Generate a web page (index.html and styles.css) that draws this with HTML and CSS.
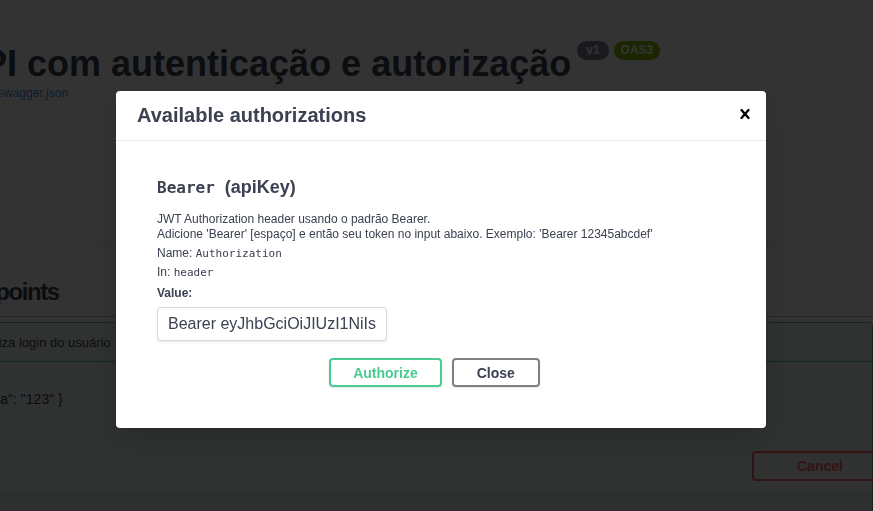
FILE: index.html
```html
<!DOCTYPE html>
<html lang="pt-BR">
<head>
<meta charset="utf-8">
<title>Swagger UI</title>
<link rel="stylesheet" href="styles.css">
</head>
<body>
<div class="page">
  <header class="info">
    <h2 class="title">API com autenticação e autorização<span class="badge badge-version">v1</span><span class="badge badge-oas">OAS3</span></h2>
    <a class="url">/swagger/v1/swagger.json</a>
  </header>
  <div class="scheme"></div>
  <section class="tag">
    <h3 class="tag-title">Endpoints</h3>
    <div class="opblock">
      <div class="opblock-summary"><span class="opblock-desc">Realiza login do usuário</span></div>
      <div class="opblock-body">
        <div class="example">"senha": "123" }</div>
        <div class="section-header"><button class="btn-cancel">Cancel</button></div>
        <div class="section-footer"></div>
      </div>
    </div>
  </section>
</div>

<div class="overlay">
  <div class="modal">
    <div class="modal-header">
      <h3 class="modal-title">Available authorizations</h3>
      <button class="close-modal" aria-label="Close">
        <svg width="20" height="20" viewBox="0 0 20 20"><path d="M14.348 14.849a1.2 1.2 0 0 1-1.697 0L10 11.819l-2.651 3.029a1.2 1.2 0 1 1-1.697-1.697l2.758-3.15-2.759-3.152a1.2 1.2 0 1 1 1.697-1.697L10 8.183l2.651-3.031a1.2 1.2 0 1 1 1.697 1.697l-2.758 3.152 2.758 3.15a1.2 1.2 0 0 1 0 1.698z"/></svg>
      </button>
    </div>
    <div class="modal-content">
      <div class="auth-container">
        <h4 class="auth-title"><code class="auth-name">Bearer</code>&nbsp; (apiKey)</h4>
        <p class="markdown">JWT Authorization header usando o padrão Bearer.<br>Adicione 'Bearer' [espaço] e então seu token no input abaixo. Exemplo: 'Bearer 12345abcdef'</p>
        <div class="row">Name: <code class="mono">Authorization</code></div>
        <div class="row">In: <code class="mono">header</code></div>
        <div class="row row-label">Value:</div>
        <input class="auth-input" type="text" value="Bearer eyJhbGciOiJIUzI1NiIsInR5cCI6IkpXVCJ9.eyJzdWIiOiIxMjMifQ">
        <div class="auth-btns">
          <button class="btn btn-authorize">Authorize</button>
          <button class="btn btn-close">Close</button>
        </div>
      </div>
    </div>
  </div>
</div>
</body>
</html>
```

FILE: styles.css
```css
html, body {
  margin: 0;
  padding: 0;
}
body {
  background: #fff;
  font-family: "Liberation Sans", Arial, sans-serif;
  color: #3b4151;
  overflow: hidden;
  height: 511px;
}

/* underlying page */
.page {
  display: flex;
  flex-direction: column;
}
.info {
  display: flex;
  flex-direction: column;
  align-items: flex-start;
}
.title {
  margin: 42px 0 0 -43px;
  font-size: 36px;
  line-height: 43px;
  font-weight: bold;
  white-space: nowrap;
  color: #3b4151;
}
.badge {
  display: inline-block;
  vertical-align: top;
  margin-top: -1px;
  height: 19px;
  line-height: 19px;
  font-size: 12px;
  font-weight: bold;
  color: #fff;
  border-radius: 57px;
}
.badge-version {
  margin-left: 6px;
  padding: 0 9px;
  background: #7d8492;
}
.badge-oas {
  margin-left: 5px;
  padding: 0 7px;
  background: #89bf04;
}
.url {
  margin-left: -70px;
  font-size: 12px;
  line-height: 16px;
  color: #4990e2;
  white-space: nowrap;
}
.scheme {
  height: 145px;
  border-bottom: 1px solid #e6e6e6;
}
.tag-title {
  margin: 31px 0 0 -46px;
  padding-bottom: 10px;
  font-size: 24px;
  line-height: 28px;
  font-weight: bold;
  letter-spacing: -1.4px;
  border-bottom: 1px solid rgba(59, 65, 81, 0.3);
  white-space: nowrap;
}
.opblock {
  margin: 5px 0 0 -20px;
  border: 1px solid #49cc90;
  border-radius: 4px;
  background: rgba(73, 204, 144, 0.1);
}
.opblock-summary {
  height: 38px;
  display: flex;
  align-items: center;
  border-bottom: 1px solid #49cc90;
}
.opblock-desc {
  margin-left: -9px;
  font-size: 13px;
  white-space: nowrap;
}
.example {
  margin: 29px 0 0 -16px;
  height: 18px;
  font-size: 14px;
  white-space: nowrap;
}
.section-header {
  height: 82px;
  display: flex;
  justify-content: flex-end;
  align-items: flex-start;
}
.btn-cancel {
  margin-top: 42px;
  margin-right: -30px;
  width: 150px;
  height: 30px;
  border: 2px solid #ff6060;
  border-radius: 4px;
  background: transparent;
  color: #ff6060;
  font-family: "Liberation Sans", Arial, sans-serif;
  font-size: 14px;
  font-weight: bold;
  text-align: left;
  padding: 0 0 0 43px;
}
.section-footer {
  height: 40px;
  background: rgba(0, 0, 0, 0.05);
}

/* overlay & modal */
.overlay {
  position: fixed;
  inset: 0;
  background: rgba(0, 0, 0, 0.8);
  display: flex;
  align-items: flex-start;
  padding: 91px 0 0 116px;
}
.modal {
  width: 650px;
  background: #fff;
  border-radius: 4px;
  box-shadow: 0 10px 30px -2px rgba(0, 0, 0, 0.2);
}
.modal-header {
  display: flex;
  align-items: center;
  justify-content: space-between;
  padding: 12px 11px 12px 21px;
  border-bottom: 1px solid #ebebeb;
}
.modal-title {
  margin: 0;
  font-size: 20px;
  line-height: 25px;
  font-weight: bold;
  color: #3b4151;
}
.close-modal {
  border: none;
  background: none;
  padding: 0 0 4px;
  width: 20px;
  height: 24px;
  display: flex;
  cursor: pointer;
}
.close-modal svg {
  fill: #000;
}
.modal-content {
  padding: 20px 20px 21px;
}
.auth-container {
  padding: 10px 20px 10px 21px;
  display: flex;
  flex-direction: column;
  align-items: flex-start;
}
.auth-title {
  margin: 6px 0 14px;
  font-size: 18px;
  line-height: 21px;
  font-weight: bold;
  color: #3b4151;
  white-space: nowrap;
}
.auth-name {
  font-family: "DejaVu Sans Mono", monospace;
  font-size: 16px;
  font-weight: bold;
}
.markdown {
  margin: 0 0 2px;
  font-size: 12px;
  line-height: 15px;
  color: #3b4151;
}
.row {
  font-size: 12px;
  line-height: 18px;
  color: #3b4151;
}
.mono {
  font-family: "DejaVu Sans Mono", monospace;
  font-size: 11px;
}
.row-label {
  margin-top: 2px;
  font-weight: bold;
}
.auth-input {
  box-sizing: border-box;
  margin-top: 5px;
  width: 230px;
  height: 34px;
  padding: 0 10px;
  border: 1px solid #d9d9d9;
  border-radius: 4px;
  font-family: "Liberation Sans", Arial, sans-serif;
  font-size: 16px;
  color: #3b4151;
  box-shadow: 0 1px 2px rgba(0, 0, 0, 0.1);
}
.auth-btns {
  align-self: stretch;
  display: flex;
  justify-content: center;
  gap: 10px;
  padding: 17px 14px 10px 0;
}
.btn {
  height: 29px;
  padding: 0 23px;
  border-radius: 4px;
  border: 2px solid #888;
  background: transparent;
  font-family: "Liberation Sans", Arial, sans-serif;
  font-size: 14px;
  font-weight: bold;
  color: #3b4151;
  box-shadow: 0 1px 2px rgba(0, 0, 0, 0.1);
}
.btn-authorize {
  padding: 0 22px;
  border-color: #49cc90;
  color: #49cc90;
}
.btn-close {
  border-color: #808080;
}
```
